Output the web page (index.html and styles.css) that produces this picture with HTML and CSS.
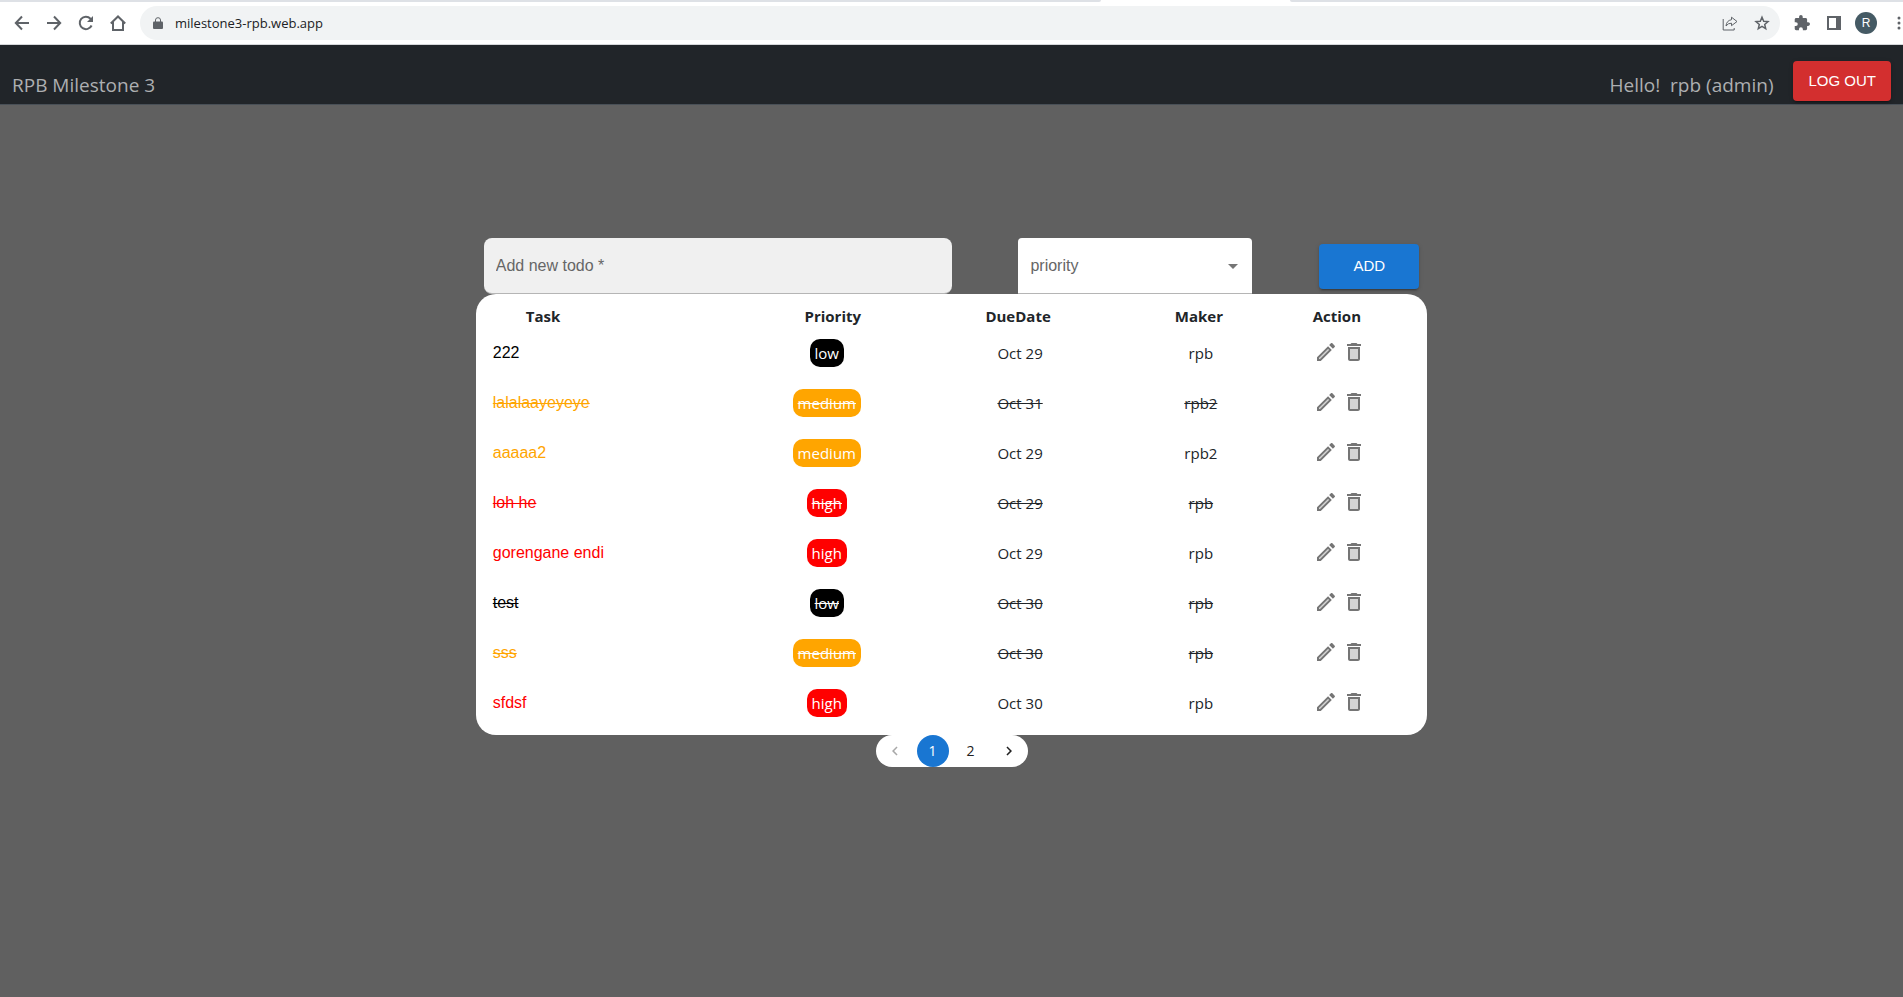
FILE: index.html
```html
<!DOCTYPE html>
<html lang="en">
<head>
<meta charset="utf-8">
<title>RPB Milestone 3</title>
<link rel="stylesheet" href="styles.css">
</head>
<body>
<svg class="sprite" aria-hidden="true">
  <symbol id="edit" viewBox="0 0 24 24"><path opacity=".3" d="M5 18.08V19h.92l9.06-9.06-.92-.92z"/><path d="M20.71 7.04c.39-.39.39-1.02 0-1.41l-2.34-2.34c-.2-.2-.45-.29-.71-.29s-.51.1-.7.29l-1.83 1.83 3.75 3.75 1.83-1.83zM3 17.25V21h3.75L17.81 9.94l-3.75-3.75L3 17.25zM5.92 19H5v-.92l9.06-9.06.92.92L5.92 19z"/></symbol>
  <symbol id="trash" viewBox="0 0 24 24"><path opacity=".3" d="M8 9h8v10H8z"/><path d="m15.5 4-1-1h-5l-1 1H5v2h14V4h-3.500zM6 19c0 1.100.9 2 2 2h8c1.100 0 2-.9 2-2V7H6v12zM8 9h8v10H8V9z"/></symbol>
</svg>
<div class="browser">
  <div class="tabs"><span class="tabs-left"></span><span class="tab-active"></span><span class="tabs-right"></span></div>
  <div class="toolbar">
    <div class="nav-buttons">
      <button aria-label="Back"><svg viewBox="0 0 16 16"><path class="line" d="M15 8H2M8 1.500 1.800 8 8 14.500"/></svg></button>
      <button aria-label="Forward"><svg viewBox="0 0 16 16"><path class="line" d="M1 8h13M8 1.500 14.200 8 8 14.500"/></svg></button>
      <button aria-label="Reload"><svg viewBox="0 0 16 16"><path class="line" d="M13.600 10.500A6.200 6.200 0 1 1 12.500 3.700L14 5.200"/><path d="M15 1v6H9z"/></svg></button>
      <button aria-label="Home"><svg viewBox="0 0 16 16"><path class="line" d="M.8 8.500 8 1.500l7.200 7M3 7v8h10V7"/></svg></button>
    </div>
    <div class="omnibox">
      <svg class="lock" viewBox="0 0 10 12"><path d="M1 4.500h8q1 0 1 1V11q0 1-1 1H1q-1 0-1-1V5.500q0-1 1-1z"/><path class="thin" d="M2.500 5V3a2.500 2.300 0 0 1 5 0v2"/></svg>
      <input class="url" aria-label="Address" value="milestone3-rpb.web.app">
      <div class="page-actions">
        <button aria-label="Share"><svg viewBox="0 0 16 16"><path class="thin" d="M1.200 4v11h11v-2M9.500 2.200 15 6.500l-5.500 4.200V8.200Q6 8 4 11q.5-5.500 5.500-6.300z"/></svg></button>
        <button aria-label="Bookmark"><svg viewBox="0 0 16 16"><path class="star" d="m8 2.200 1.700 4 4.300.4-3.300 2.800 1 4.200L8 11.400l-3.700 2.200 1-4.200L2 6.600l4.300-.4z"/></svg></button>
      </div>
    </div>
    <div class="chrome-actions">
      <button aria-label="Extensions"><svg viewBox="1 1 22 22"><path d="M20.500 11H19V7c0-1.100-.9-2-2-2h-4V3.500a2.500 2.500 0 0 0-5 0V5H4c-1.100 0-2 .9-2 2v3.800h1.500a2.700 2.700 0 0 1 0 5.400H2V20c0 1.100.9 2 2 2h3.800v-1.500a2.700 2.700 0 0 1 5.400 0V22H17c1.100 0 2-.9 2-2v-4h1.500a2.500 2.500 0 0 0 0-5z"/></svg></button>
      <button aria-label="Side panel"><svg viewBox="0 0 16 16"><path fill-rule="evenodd" d="M1 1h14v14H1zM3 3v10h7V3z"/></svg></button>
      <button class="avatar" aria-label="Profile">R</button>
      <button class="more" aria-label="More"><svg viewBox="0 0 4 16"><circle cx="2" cy="3" r="1.500"/><circle cx="2" cy="8" r="1.500"/><circle cx="2" cy="13" r="1.500"/></svg></button>
    </div>
  </div>
</div>

<header class="navbar">
  <span class="brand">RPB Milestone 3</span>
  <span class="greeting">Hello!&nbsp; rpb (admin)</span>
  <button class="btn logout">LOG OUT</button>
</header>

<main class="content">
  <form class="todo-form">
    <input class="todo-input" type="text" aria-label="Add new todo" placeholder="Add new todo *">
    <div class="select-wrap">
      <select class="priority-select" aria-label="priority"><option>priority</option><option>low</option><option>medium</option><option>high</option></select>
      <svg class="caret" viewBox="0 0 24 24"><path d="m7 10 5 5 5-5z"/></svg>
    </div>
    <button class="btn add" type="button">ADD</button>
  </form>

  <section class="card">
    <table class="todos">
      <thead><tr><th class="task">Task</th><th class="priority">Priority</th><th class="due">DueDate</th><th class="maker">Maker</th><th class="action">Action</th></tr></thead>
      <tbody>
        <tr class="low"><td>222</td><td><span class="pill">low</span></td><td>Oct 29</td><td>rpb</td><td><div class="actions"><button aria-label="Edit"><svg><use href="#edit"/></svg></button><button aria-label="Delete"><svg><use href="#trash"/></svg></button></div></td></tr>
        <tr class="medium done"><td>lalalaayeyeye</td><td><span class="pill">medium</span></td><td>Oct 31</td><td>rpb2</td><td><div class="actions"><button aria-label="Edit"><svg><use href="#edit"/></svg></button><button aria-label="Delete"><svg><use href="#trash"/></svg></button></div></td></tr>
        <tr class="medium"><td>aaaaa2</td><td><span class="pill">medium</span></td><td>Oct 29</td><td>rpb2</td><td><div class="actions"><button aria-label="Edit"><svg><use href="#edit"/></svg></button><button aria-label="Delete"><svg><use href="#trash"/></svg></button></div></td></tr>
        <tr class="high done"><td>loh he</td><td><span class="pill">high</span></td><td>Oct 29</td><td>rpb</td><td><div class="actions"><button aria-label="Edit"><svg><use href="#edit"/></svg></button><button aria-label="Delete"><svg><use href="#trash"/></svg></button></div></td></tr>
        <tr class="high"><td>gorengane endi</td><td><span class="pill">high</span></td><td>Oct 29</td><td>rpb</td><td><div class="actions"><button aria-label="Edit"><svg><use href="#edit"/></svg></button><button aria-label="Delete"><svg><use href="#trash"/></svg></button></div></td></tr>
        <tr class="low done"><td>test</td><td><span class="pill">low</span></td><td>Oct 30</td><td>rpb</td><td><div class="actions"><button aria-label="Edit"><svg><use href="#edit"/></svg></button><button aria-label="Delete"><svg><use href="#trash"/></svg></button></div></td></tr>
        <tr class="medium done"><td>sss</td><td><span class="pill">medium</span></td><td>Oct 30</td><td>rpb</td><td><div class="actions"><button aria-label="Edit"><svg><use href="#edit"/></svg></button><button aria-label="Delete"><svg><use href="#trash"/></svg></button></div></td></tr>
        <tr class="high"><td>sfdsf</td><td><span class="pill">high</span></td><td>Oct 30</td><td>rpb</td><td><div class="actions"><button aria-label="Edit"><svg><use href="#edit"/></svg></button><button aria-label="Delete"><svg><use href="#trash"/></svg></button></div></td></tr>
      </tbody>
    </table>
  </section>

  <nav class="pagination" aria-label="Pages">
    <button disabled aria-label="Previous"><svg viewBox="0 0 24 24"><path d="M15.410 7.410 14 6l-6 6 6 6 1.410-1.410L10.830 12z"/></svg></button>
    <button class="current">1</button>
    <button>2</button>
    <button aria-label="Next"><svg viewBox="0 0 24 24"><path d="M10 6 8.590 7.410 13.170 12l-4.580 4.590L10 18l6-6z"/></svg></button>
  </nav>
</main>
</body>
</html>
```
FILE: styles.css
```css
* { box-sizing: border-box; }
body {
  margin: 0;
  min-height: 100vh;
  background: #606060;
  color: #212529;
  font: 15px/24px "Open Sans", "Noto Sans", sans-serif;
}
button { margin: 0; padding: 0; border: 0; background: none; font: inherit; color: inherit; cursor: pointer; }
svg { display: block; fill: currentColor; }
.sprite { display: none; }

/* Browser bar */
.browser { background: #fff; border-bottom: 1px solid #d5d7da; color: #5f6368; overflow: hidden; }
.tabs { display: flex; height: 2px; background: #fff; }
.tabs-left, .tabs-right { background: #dee1e6; }
.tabs-left { flex: 1101; border-bottom-right-radius: 2px; }
.tab-active { flex: 189; }
.tabs-right { flex: 613; border-bottom-left-radius: 2px; }
.toolbar { display: flex; align-items: center; padding: 4px 2px 4px 14px; }
.toolbar svg { width: 16px; height: 16px; }
.nav-buttons { display: flex; gap: 16px; padding-right: 14px; }
.line { fill: none; stroke: currentColor; stroke-width: 2; }
.thin { fill: none; stroke: currentColor; stroke-width: 1; }
.star { fill: none; stroke: currentColor; stroke-width: 1.5; }
.omnibox {
  flex: 1; display: flex; align-items: center; gap: 12px;
  height: 34px; padding: 0 10px 0 13px; border-radius: 17px; background: #f1f3f4;
}
.page-actions { display: flex; gap: 16px; }
.toolbar .lock { width: 10px; height: 12px; }
.url { flex: 1; min-width: 0; padding: 0; border: 0; background: none; color: #202124; font: 13px/20px "Open Sans", sans-serif; }
.chrome-actions { display: flex; align-items: center; gap: 16px; padding-left: 14px; }
.avatar {
  width: 22px; height: 22px; margin: 0 -3px; border-radius: 50%;
  background: #455a64; color: #fff; font: 12px/22px "Liberation Sans", sans-serif;
}
.toolbar .more svg { width: 4px; }
.more { margin-left: 7px; }

/* App header */
.navbar {
  display: flex; align-items: flex-end; gap: 20px;
  padding: 16px 12px 3px; border-bottom: 1px solid #495057;
  background: #212529; color: #adafb1; font-size: 19px; line-height: 32px;
}
.brand { margin-right: auto; }
.btn {
  border-radius: 4px; color: #fff; font: 15px/24px "Liberation Sans", sans-serif;
  box-shadow: 0 3px 1px -2px rgba(0,0,0,.2), 0 2px 2px rgba(0,0,0,.14), 0 1px 5px rgba(0,0,0,.12);
}
.logout { padding: 8px 15px; background: #d32f2f; }

/* Todo form */
.content { width: 50%; margin: 0 auto; padding-top: 133px; }
.todo-form { display: flex; align-items: center; justify-content: space-between; padding: 0 8px; }
.todo-input, .priority-select {
  height: 56px; padding: 0 12px; border: 0; border-bottom: 1px solid #b5b5b5;
  color: #666; font: 16px/24px "Liberation Sans", sans-serif;
}
.todo-input { width: 50%; border-radius: 8px; background: #f0f0f0; }
.todo-input::placeholder { color: #666; opacity: 1; }
.select-wrap { display: grid; align-items: center; width: 25%; }
.priority-select { grid-area: 1 / 1; width: 100%; border-radius: 4px 4px 0 0; background: #fff; appearance: none; }
.caret { grid-area: 1 / 1; justify-self: end; width: 24px; height: 24px; margin-right: 7px; color: #757575; pointer-events: none; }
.add { width: 100px; height: 45px; background: #1976d2; }

/* Todo table */
.card { padding-bottom: 7px; border-radius: 20px; background: #fff; }
.todos { width: 100%; border-collapse: collapse; table-layout: fixed; }
.todos th { height: 34px; padding: 10px 0 0; font-weight: 700; }
.todos .task { width: 27%; padding-left: 50px; text-align: left; }
.todos .priority { width: 20%; padding-left: 10px; }
.todos .due { width: 20%; }
.todos .maker { width: 18%; }
.todos .action { width: 15%; padding-right: 38px; }
.todos td { height: 50px; padding: 0 0 0 4px; text-align: center; }
.todos td:first-child { padding: 0 0 0 17px; text-align: left; font: 16px/24px "Liberation Sans", sans-serif; }
.todos td:nth-child(2) { padding: 0 2px 0 0; }
.todos td:last-child { padding: 0 32px 2px 0; }
.done td { text-decoration: line-through; }
.pill { display: inline-block; padding: 2px 5px; border-radius: 10px; color: #fff; }
.done .pill { text-decoration: line-through; }
.low td:first-child { color: #000; }
.medium td:first-child { color: orange; }
.high td:first-child { color: red; }
.low .pill { background: #000; }
.medium .pill { background: orange; }
.high .pill { background: red; }
.actions { display: flex; justify-content: center; gap: 4px; color: #757575; }
.actions svg { width: 24px; height: 24px; }

/* Pagination */
.pagination { display: flex; width: max-content; margin: 0 auto; border-radius: 16px; background: #fff; }
.pagination button {
  display: grid; place-items: center; width: 32px; height: 32px; margin: 0 3px;
  border-radius: 50%; color: #212121; font: 14px/20px "Open Sans", sans-serif;
}
.pagination svg { width: 18px; height: 18px; }
.pagination button:disabled { color: #a8a8a8; }
.pagination .current { background: #1976d2; color: #fff; }
```
